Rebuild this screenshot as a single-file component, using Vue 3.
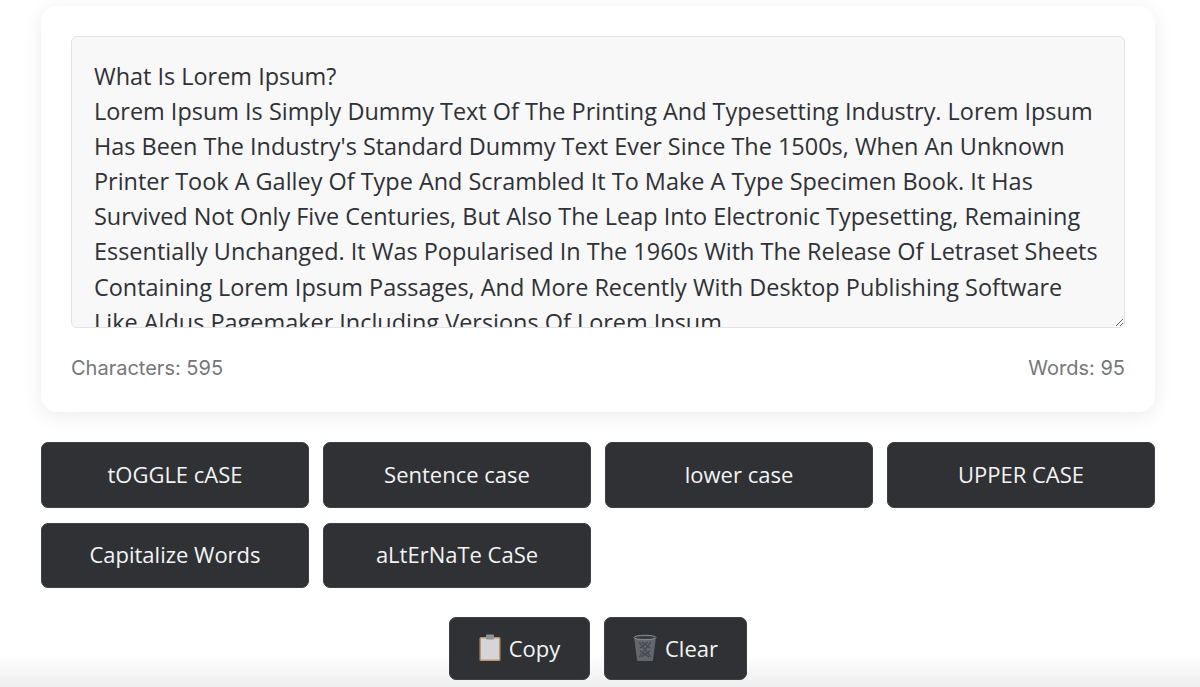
<script setup>
import {computed, ref} from "vue";

const text = ref(`What Is Lorem Ipsum?
Lorem Ipsum Is Simply Dummy Text Of The Printing And Typesetting Industry. Lorem Ipsum Has Been The Industry's Standard Dummy Text Ever Since The 1500s, When An Unknown Printer Took A Galley Of Type And Scrambled It To Make A Type Specimen Book. It Has Survived Not Only Five Centuries, But Also The Leap Into Electronic Typesetting, Remaining Essentially Unchanged. It Was Popularised In The 1960s With The Release Of Letraset Sheets Containing Lorem Ipsum Passages, And More Recently With Desktop Publishing Software Like Aldus Pagemaker Including Versions Of Lorem Ipsum.`)

const case_buttons = ['tOGGLE cASE', 'Sentence case', 'lower case', 'UPPER CASE', 'Capitalize Words', 'aLtErNaTe CaSe']

const characters = computed(() => text.value.length)
const words = computed(() => text.value.trim().split(/\s+/).length)
</script>

<template>
  <div class="page">
    <div class="fade"></div>

    <div class="card">
      <textarea class="editor" v-model="text" spellcheck="false"></textarea>
      <div class="stats">
        <span>Characters: {{ characters }}</span>
        <span>Words: {{ words }}</span>
      </div>
    </div>

    <div class="case-grid">
      <button v-for="label in case_buttons" :key="label" class="btn">{{ label }}</button>
    </div>

    <div class="actions">
      <button class="btn action copy">
        <svg width="22" height="27" viewBox="0 0 22 27">
          <rect x="0.5" y="3" width="21" height="24" rx="1.5" fill="#b8966a"/>
          <rect x="2" y="4.5" width="18" height="21" fill="#d5d5d8"/>
          <rect x="7" y="0.5" width="8" height="5" rx="1" fill="#8f9296"/>
        </svg>
        <span>Copy</span>
      </button>
      <button class="btn action clear">
        <svg width="24" height="27" viewBox="0 0 24 27">
          <path d="M1 3h22l-3 23a1 1 0 0 1-1 1H5a1 1 0 0 1-1-1z" fill="#63676c"/>
          <ellipse cx="12" cy="3.5" rx="11" ry="2.2" fill="#3a3d42" stroke="#8d9196" stroke-width="1"/>
          <path d="M6 8l12 15M18 8L6 23M9 8l8 6M15 8l-8 6M8 23l9-6M16 23l-9-6" stroke="#43464b" stroke-width="1.2" fill="none"/>
        </svg>
        <span>Clear</span>
      </button>
    </div>
  </div>
</template>

<style>
html, body {
  margin: 0;
  background: #fff;
  overflow: hidden;
}
</style>

<style scoped>
.page {
  position: relative;
  height: 687px;
  box-sizing: border-box;
  padding: 6px 45px 0 41px;
  overflow: hidden;
  font-family: "Open Sans", sans-serif;
}

.card {
  position: relative;
  background: #fff;
  border-radius: 16px;
  padding: 30px;
  height: 406px;
  box-sizing: border-box;
  box-shadow: 0 4px 20px rgba(0, 0, 0, 0.08);
}

.editor {
  display: block;
  width: 100%;
  height: 292px;
  box-sizing: border-box;
  padding: 22px 22px;
  border: 1px solid #e3e3e5;
  border-radius: 6px;
  background: #f8f8f9;
  color: #2f3136;
  font-family: "Open Sans", sans-serif;
  font-size: 23.45px;
  line-height: 35.1px;
  outline: none;
  overflow: hidden;
  resize: vertical;
}

.stats {
  display: flex;
  justify-content: space-between;
  margin-top: 27px;
  color: #75777b;
  font-family: Inter, sans-serif;
  font-size: 20px;
  line-height: 26px;
}

.case-grid {
  position: relative;
  display: grid;
  grid-template-columns: repeat(4, 1fr);
  gap: 15px 14px;
  margin-top: 30px;
}

.btn {
  height: 65.5px;
  padding: 0 0 2px;
  border: 1px solid #3d4044;
  border-radius: 7px;
  background: #2f3134;
  color: #f4f4f5;
  font-family: "Open Sans", sans-serif;
  font-size: 22px;
  cursor: pointer;
}

.actions {
  position: relative;
  display: flex;
  justify-content: center;
  gap: 14px;
  margin-top: 29px;
}

.action {
  height: 63px;
  display: flex;
  align-items: center;
  justify-content: center;
  gap: 8px;
}

.copy {
  width: 141px;
}

.clear {
  width: 143px;
}

.fade {
  position: absolute;
  left: 0;
  right: 0;
  bottom: 0;
  height: 32px;
  background: linear-gradient(rgba(238, 238, 239, 0), rgba(238, 238, 239, 1));
  pointer-events: none;
}
</style>
